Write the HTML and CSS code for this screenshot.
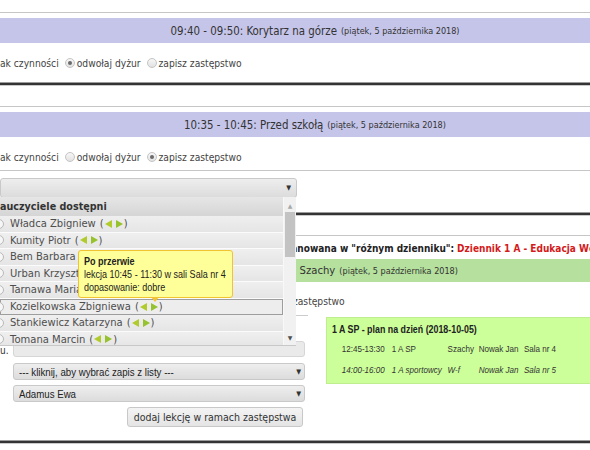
FILE: index.html
```html
<!DOCTYPE html>
<html lang="pl">
<head>
<meta charset="utf-8">
<link rel="stylesheet" href="styles.css">
</head>
<body>
<div class="page">
  <section class="duty">
    <div class="rule-thin"></div>
    <div class="bar bar-duty"><span class="bar-title">09:40 - 09:50: Korytarz na górze</span><span class="bar-date">(piątek, 5 października 2018)</span></div>
    <div class="choice">
      <span>ak czynności</span>
      <span class="radio checked"></span><span>odwołaj dyżur</span>
      <span class="radio"></span><span>zapisz zastępstwo</span>
    </div>
    <div class="rule-thick"></div>
  </section>

  <section class="duty">
    <div class="rule-thin"></div>
    <div class="bar bar-duty"><span class="bar-title">10:35 - 10:45: Przed szkołą</span><span class="bar-date">(piątek, 5 października 2018)</span></div>
    <div class="choice">
      <span>ak czynności</span>
      <span class="radio"></span><span>odwołaj dyżur</span>
      <span class="radio checked"></span><span>zapisz zastępstwo</span>
    </div>
    <div class="rule-thin rule-gap"></div>
    <div class="select select-teacher"><span class="select-text"></span><span class="caret">&#9660;</span></div>
    <div class="rule-thick rule-after-select"></div>
  </section>

  <section class="lesson">
    <div class="rule-thin"></div>
    <div class="notice">Lekcja zaplanowana w "różnym dzienniku": <span class="notice-red">Dziennik 1 A - Edukacja Wczesnoszkolna</span></div>
    <div class="bar bar-lesson"><span class="bar-title">12:45 - 13:30: Szachy</span><span class="bar-date">(piątek, 5 października 2018)</span></div>
    <div class="choice choice-lesson">
      <span>ak czynności</span>
      <span class="radio"></span><span>odwołaj lekcję</span>
      <span class="radio checked"></span><span>zapisz zastępstwo</span>
    </div>
    <div class="lesson-body">
      <div class="form">
        <div class="form-label">u.</div>
        <div class="input"></div>
        <div class="form-label"></div>
        <div class="select select-small"><span class="narrow">--- kliknij, aby wybrać zapis z listy ---</span><span class="caret">&#9660;</span></div>
        <div class="form-label"></div>
        <div class="select select-small"><span class="narrow">Adamus Ewa</span><span class="caret">&#9660;</span></div>
        <div class="form-label"></div>
        <div class="button">dodaj lekcję w ramach zastępstwa</div>
      </div>
      <div class="plan">
        <div class="plan-inner">
          <div class="plan-title">1 A SP - plan na dzień (2018-10-05)</div>
          <div class="plan-table">
            <span>12:45-13:30</span><span>1 A SP</span><span>Szachy</span><span>Nowak Jan</span><span>Sala nr 4</span>
            <span class="other">14:00-16:00</span><span class="other">1 A sportowcy</span><span class="other">W-f</span><span class="other">Nowak Jan</span><span class="other">Sala nr 5</span>
          </div>
        </div>
      </div>
    </div>
    <div class="rule-thick rule-end"></div>
  </section>

  <div class="dropdown">
    <div class="dd-rows">
      <div class="dd-head">Nauczyciele dostępni</div>
      <div class="dd-row"><span class="dd-radio"></span><span class="dd-name">Władca Zbigniew</span><span class="dd-nav">(<svg class="tri" viewBox="0 0 7 8"><polygon points="7,0 7,8 0,4" class="tri-l"/></svg><svg class="tri" viewBox="0 0 7 8"><polygon points="0,0 0,8 7,4" class="tri-r"/></svg>)</span></div>
      <div class="dd-row"><span class="dd-radio"></span><span class="dd-name">Kumity Piotr</span><span class="dd-nav">(<svg class="tri" viewBox="0 0 7 8"><polygon points="7,0 7,8 0,4" class="tri-l"/></svg><svg class="tri" viewBox="0 0 7 8"><polygon points="0,0 0,8 7,4" class="tri-r"/></svg>)</span></div>
      <div class="dd-row"><span class="dd-radio"></span><span class="dd-name">Bem Barbara</span><span class="dd-nav">(<svg class="tri" viewBox="0 0 7 8"><polygon points="7,0 7,8 0,4" class="tri-l"/></svg><svg class="tri" viewBox="0 0 7 8"><polygon points="0,0 0,8 7,4" class="tri-r"/></svg>)</span></div>
      <div class="dd-row"><span class="dd-radio"></span><span class="dd-name">Urban Krzysztof</span><span class="dd-nav">(<svg class="tri" viewBox="0 0 7 8"><polygon points="7,0 7,8 0,4" class="tri-l"/></svg><svg class="tri" viewBox="0 0 7 8"><polygon points="0,0 0,8 7,4" class="tri-r"/></svg>)</span></div>
      <div class="dd-row"><span class="dd-radio"></span><span class="dd-name">Tarnawa Maria</span><span class="dd-nav">(<svg class="tri" viewBox="0 0 7 8"><polygon points="7,0 7,8 0,4" class="tri-l"/></svg><svg class="tri" viewBox="0 0 7 8"><polygon points="0,0 0,8 7,4" class="tri-r"/></svg>)</span></div>
      <div class="dd-row dd-hover"><span class="dd-radio"></span><span class="dd-name">Kozielkowska Zbigniewa</span><span class="dd-nav">(<svg class="tri" viewBox="0 0 7 8"><polygon points="7,0 7,8 0,4" class="tri-l"/></svg><svg class="tri" viewBox="0 0 7 8"><polygon points="0,0 0,8 7,4" class="tri-r"/></svg>)</span></div>
      <div class="dd-row"><span class="dd-radio"></span><span class="dd-name">Stankiewicz Katarzyna</span><span class="dd-nav">(<svg class="tri" viewBox="0 0 7 8"><polygon points="7,0 7,8 0,4" class="tri-l"/></svg><svg class="tri" viewBox="0 0 7 8"><polygon points="0,0 0,8 7,4" class="tri-r"/></svg>)</span></div>
      <div class="dd-row"><span class="dd-radio"></span><span class="dd-name">Tomana Marcin</span><span class="dd-nav">(<svg class="tri" viewBox="0 0 7 8"><polygon points="7,0 7,8 0,4" class="tri-l"/></svg><svg class="tri" viewBox="0 0 7 8"><polygon points="0,0 0,8 7,4" class="tri-r"/></svg>)</span></div>
    </div>
    <div class="dd-scroll">
      <span class="sb-up">&#9650;</span>
      <span class="sb-thumb"></span>
      <span class="sb-down">&#9660;</span>
    </div>
  </div>

  <div class="tip">
    <div class="tip-body">
      <div class="tip-head">Po przerwie</div>
      <div>lekcja 10:45 - 11:30 w sali Sala nr 4</div>
      <div>dopasowanie: dobre</div>
    </div>
  </div>
</div>
</body>
</html>
```

FILE: styles.css
```css
* { box-sizing: border-box; }
html, body { margin: 0; padding: 0; background: #fff; }
body {
  width: 590px;
  height: 450px;
  overflow: hidden;
  font-family: "DejaVu Sans Condensed", "DejaVu Sans", sans-serif;
  font-stretch: condensed;
  color: #444;
}
.page { position: relative; width: 590px; padding-top: 12px; overflow: hidden; }

.rule-thin { height: 1px; background: #c6c6c6; }
.rule-thick {
  height: 4px;
  background: #343434;
  border-top: 1px solid #9c9c9c;
  border-bottom: 1px solid #cacaca;
  margin-top: 11px;
}
.duty + .duty { margin-top: 20px; }
.duty + .lesson { margin-top: 19px; }

.bar {
  display: flex;
  align-items: center;
  white-space: nowrap;
  color: #333;
}
.bar-duty {
  height: 25px;
  margin-top: 5px;
  justify-content: center;
  padding-left: 40px;
  background: #c5c5e9;
}
.bar-title { font-size: 11.4px; }
.bar-date { font-size: 9px; margin-left: 4px; }

.choice {
  display: flex;
  align-items: center;
  height: 16px;
  margin-top: 12px;
  font-size: 10.2px;
  white-space: nowrap;
}
.radio {
  width: 10px;
  height: 10px;
  border-radius: 50%;
  border: 1px solid #c4c4c4;
  background: linear-gradient(#f7f7f7, #e2e2e2);
  margin: 0 2px 0 6px;
  position: relative;
}
.radio.checked::after {
  content: "";
  position: absolute;
  left: 2px;
  top: 2px;
  width: 4px;
  height: 4px;
  border-radius: 50%;
  background: #6a6a6a;
}
.rule-gap { margin-top: 5px; }

.select {
  display: flex;
  align-items: center;
  justify-content: space-between;
  border: 1px solid #c9c9c9;
  border-radius: 3px;
  background: linear-gradient(#eeeeee, #dcdcdc);
  color: #222;
}
.select-teacher { width: 297px; height: 20px; margin-top: 7px; padding: 0 5px; }
.caret { font-size: 7px; color: #333; font-family: "DejaVu Sans", sans-serif; }
.rule-after-select { margin-top: 14px; }

.notice {
  height: 16px;
  margin-top: 4px;
  padding-left: 235px;
  display: flex;
  align-items: center;
  white-space: nowrap;
  font-size: 10px;
  font-weight: bold;
  color: #222;
}
.notice-red { color: #d31b1b; margin-left: 3px; }

.bar-lesson {
  height: 23px;
  margin-top: 3px;
  padding-left: 225px;
  background: #b5e09d;
}
.bar-lesson .bar-title { font-size: 11.2px; }

.choice-lesson { margin-top: 11px; padding-left: 102px; }

.lesson-body { display: flex; align-items: flex-start; margin-top: 6px; }
.form {
  width: 308px;
  flex-shrink: 0;
  border-top: 1px solid #cccccc;
  padding-top: 25px;
  display: grid;
  grid-template-columns: 8px 292px;
  column-gap: 5px;
  row-gap: 5px;
  align-items: start;
}
.form-label { font-size: 10px; color: #333; line-height: 14px; padding-top: 3px; }
.input {
  height: 16px;
  border: 1px solid #d6d6d6;
  border-radius: 3px;
  background: #eaeaea;
}

/* Arial Narrow look: Liberation Sans, horizontally condensed */
.narrow {
  display: inline-block;
  font-family: "Liberation Sans", Arial, sans-serif;
  font-stretch: normal;
  transform: scaleX(0.82);
  transform-origin: left center;
  white-space: nowrap;
}
.select-small {
  height: 17px;
  padding: 0 3px 0 5px;
  font-size: 11.8px;
}
.button {
  justify-self: end;
  margin-right: 2px;
  width: 176px;
  height: 20px;
  display: flex;
  align-items: center;
  justify-content: center;
  border: 1px solid #c8c8c8;
  border-radius: 3px;
  background: linear-gradient(#f4f4f4, #e4e4e4);
  font-size: 10.5px;
  color: #333;
  white-space: nowrap;
}

.plan {
  flex-shrink: 0;
  width: 300px;
  height: 67px;
  margin-left: 18px;
  margin-top: 2px;
  padding: 4px 0 0 5px;
  background: #ccff99;
  border: 1px solid #bfee8e;
  color: #333;
}
.plan-inner {
  font-family: "Liberation Sans", Arial, sans-serif;
  font-stretch: normal;
  transform: scaleX(0.82);
  transform-origin: left top;
  white-space: nowrap;
}
.plan-title { font-weight: bold; font-size: 10.8px; line-height: 14px; color: #222; }
.plan-table {
  display: grid;
  grid-template-columns: 61px 68px 38px 55px auto;
  grid-auto-rows: 21px;
  align-items: center;
  margin-top: 2px;
  padding-left: 12px;
  font-size: 9.8px;
}
.plan-table .other { font-style: italic; }

.rule-end { margin-top: 13px; }

/* open dropdown list over the page */
.dropdown {
  position: absolute;
  left: 0;
  top: 197px;
  width: 296px;
  height: 149px;
  display: flex;
  background: #ececec;
  border-bottom: 1px solid #c8c8c8;
  overflow: hidden;
  font-family: "DejaVu Sans", sans-serif;
  font-stretch: normal;
}
.dd-rows { width: 284px; flex-shrink: 0; border-right: 1px solid #f8f8f8; }
.dd-head {
  height: 19px;
  display: flex;
  align-items: center;
  text-indent: -8px;
  background: linear-gradient(#e6e6e6, #d5d5d5);
  font-weight: bold;
  font-size: 9.6px;
  color: #333;
  white-space: nowrap;
}
.dd-row {
  height: 16.5px;
  display: flex;
  align-items: center;
  background: linear-gradient(#efefef, #e5e5e5);
  border-bottom: 1px solid #fbfbfb;
  font-size: 10px;
  color: #4e4e4e;
  white-space: nowrap;
}
.dd-hover {
  border: 1px solid #9d9d9d;
  background: #ededed;
}
.dd-radio {
  width: 10px;
  height: 10px;
  margin-left: -6px;
  margin-right: 6px;
  border-radius: 50%;
  border: 1px solid #b8b8b8;
  background: #f6f6f6;
  flex-shrink: 0;
}
.dd-hover .dd-radio { margin-left: -7px; }
.dd-nav { display: inline-flex; align-items: center; margin-left: 4px; }
.tri { width: 7px; height: 8px; margin: 0 1px; }
.tri-l { fill: #b1cb2c; }
.tri-r { fill: #95c22d; }
.tri + .tri { margin-left: 3px; }

.dd-scroll {
  position: relative;
  flex: 1;
  background: #f1f1f1;
}
.sb-up, .sb-down {
  position: absolute;
  left: 0;
  right: 0;
  text-align: center;
  font-size: 6px;
  line-height: 8px;
}
.sb-up { top: 5px; color: #a8a8a8; }
.sb-down { bottom: 3px; color: #505050; }
.sb-thumb {
  position: absolute;
  left: 1px;
  right: 1px;
  top: 15px;
  height: 45px;
  background: #c3c3c3;
}

/* tooltip */
.tip {
  position: absolute;
  left: 78px;
  top: 250px;
  width: 155px;
  height: 48px;
  padding: 4px 5px 0 5px;
  background: #ffff99;
  border: 1px solid #f1c232;
  border-radius: 3px;
  color: #222;
}
.tip-body {
  font-family: "Liberation Sans", Arial, sans-serif;
  font-stretch: normal;
  font-size: 11px;
  line-height: 12.8px;
  white-space: nowrap;
  transform: scaleX(0.82);
  transform-origin: left top;
}
.tip-head { font-weight: bold; }
.tip::after {
  content: "";
  position: absolute;
  left: 72px;
  bottom: -5px;
  border-left: 4px solid transparent;
  border-right: 4px solid transparent;
  border-top: 5px solid #f1c232;
}
```
